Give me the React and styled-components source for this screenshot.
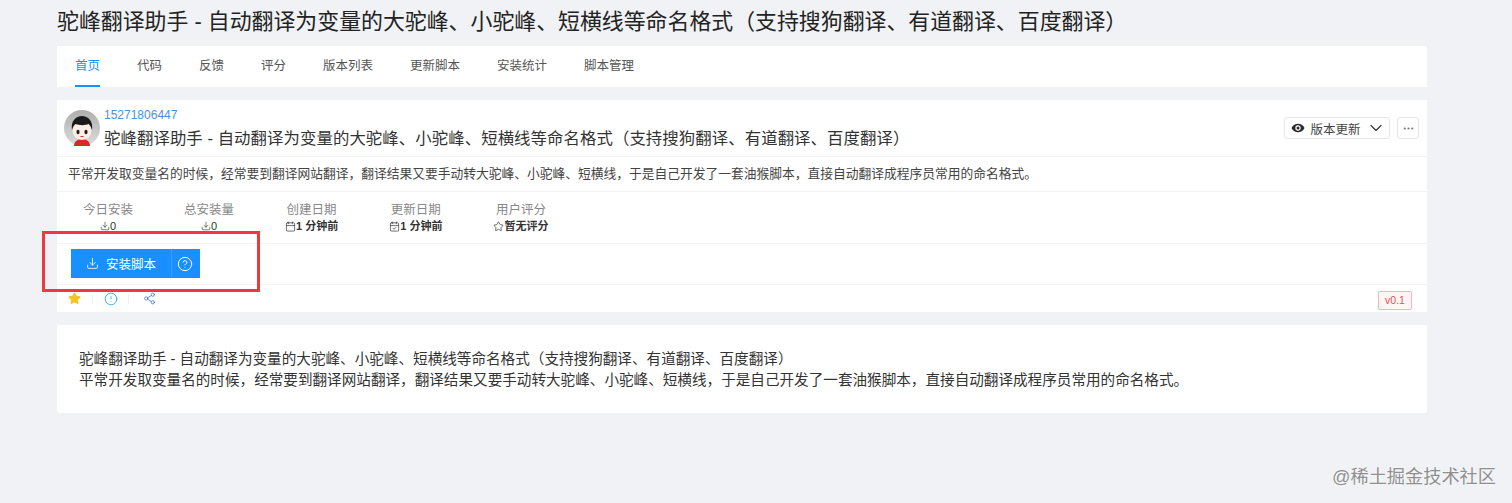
import styled, { createGlobalStyle } from "styled-components";
import { ChevronDown, Ellipsis, Download, CircleHelp, Star, CircleAlert, Share2, Calendar, CalendarCheck } from "lucide-react";

const GlobalStyle = createGlobalStyle`
  html, body {
    margin: 0;
    padding: 0;
    height: 503px;
    overflow: hidden;
    background: #f0f2f5;
    color: #333;
    font-family: "Liberation Sans", "Noto Sans CJK SC", sans-serif;
  }
`;

const Page = styled.div`
  position: relative;
  width: 1512px;
  height: 503px;
  padding-left: 57px;
  box-sizing: border-box;
`;

const Column = styled.div`
  width: 1370px;
  display: flex;
  flex-direction: column;
`;

const PageTitle = styled.h1`
  margin: 0;
  height: 46px;
  line-height: 44px;
  font-size: 21.9px;
  font-weight: 400;
  color: #222;
  white-space: nowrap;
`;

const Tabs = styled.nav`
  height: 41px;
  background: #fff;
  display: flex;
  padding-left: 18px;
  gap: 37px;
  margin-bottom: 13px;
`;

const Tab = styled.a`
  height: 41px;
  line-height: 41px;
  box-sizing: border-box;
  font-size: 12.5px;
  white-space: nowrap;
  color: ${(p) => (p.$active ? "#1890ff" : "#555")};
  border-bottom: ${(p) => (p.$active ? "2px solid #1890ff" : "none")};
`;

const Card = styled.section`
  background: #fff;
  display: flex;
  flex-direction: column;
`;

const Header = styled.header`
  height: 57px;
  box-sizing: border-box;
  display: flex;
  align-items: flex-start;
  padding: 8px 8px 0 7px;
  border-bottom: 1px solid #f2f3f5;
`;

const Avatar = styled.svg`
  width: 36px;
  height: 36px;
  margin-top: 2px;
  flex: none;
`;

const HeaderText = styled.div`
  margin-left: 4px;
  flex: 1;
  min-width: 0;
`;

const Author = styled.div`
  font-size: 12px;
  line-height: 14px;
  color: #4a90e2;
`;

const ScriptName = styled.div`
  font-size: 16.4px;
  letter-spacing: 0.08px;
  line-height: 22px;
  margin-top: 5px;
  white-space: nowrap;
  color: #333;
`;

const Actions = styled.div`
  display: flex;
  gap: 7px;
  margin-top: 9px;
`;

const OutlineButton = styled.button`
  height: 22px;
  box-sizing: border-box;
  border: 1px solid #e4e6ea;
  border-radius: 3px;
  background: #fff;
  padding: 0 0 0 ${(p) => p.$inset || 0}px;
  width: ${(p) => p.$width};
  display: flex;
  align-items: center;
  justify-content: center;
  gap: 5px;
  font: inherit;
  font-size: 12.5px;
  color: #444;
`;

const Description = styled.p`
  margin: 0;
  height: 35px;
  line-height: 33px;
  box-sizing: border-box;
  padding-left: 11px;
  font-size: 12.75px;
  color: #444;
  border-bottom: 1px solid #f2f3f5;
  white-space: nowrap;
`;

const Stats = styled.div`
  height: 52px;
  box-sizing: border-box;
  display: flex;
  gap: 51px;
  padding: 11px 0 0 26px;
  border-bottom: 1px solid #f2f3f5;
`;

const Stat = styled.div`
  display: flex;
  flex-direction: column;
  align-items: center;
`;

const StatLabel = styled.div`
  font-size: 12.5px;
  line-height: 15px;
  color: #888;
`;

const StatValue = styled.div`
  font-size: 11px;
  line-height: 14px;
  margin-top: 1px;
  color: #333;
  font-weight: ${(p) => (p.$bold ? 700 : 400)};
  display: flex;
  align-items: center;
  justify-content: center;
  white-space: nowrap;
`;

const InstallRow = styled.div`
  height: 41px;
  box-sizing: border-box;
  padding: 5px 0 0 14px;
  display: flex;
  border-bottom: 1px solid #f2f3f5;
`;

const InstallButton = styled.button`
  width: 100px;
  height: 29px;
  border: none;
  background: #1890ff;
  color: #fff;
  font: inherit;
  font-size: 12.5px;
  padding: 0;
  display: flex;
  align-items: center;
  justify-content: center;
  gap: 7px;
`;

const HelpButton = styled.button`
  width: 29px;
  height: 29px;
  border: none;
  border-left: 1px solid #3aa0ff;
  background: #1890ff;
  color: #fff;
  padding: 0 2px 0 0;
  display: flex;
  align-items: center;
  justify-content: center;
`;

const CardFooter = styled.footer`
  height: 27px;
  box-sizing: border-box;
  display: flex;
  align-items: flex-start;
  padding: 6px 15px 0 11px;
`;

const FooterIcon = styled.span`
  display: flex;
  align-items: center;
  width: 36px;
  height: 15px;
  padding-left: ${(p) => p.$inset || 0}px;
  &::after {
    content: "";
    display: ${(p) => (p.$divider ? "block" : "none")};
    width: 1px;
    height: 10px;
    background: #eceef1;
    margin-left: auto;
    margin-right: 11px;
  }
`;

const Version = styled.span`
  margin-left: auto;
  height: 19px;
  line-height: 17px;
  width: 34px;
  box-sizing: border-box;
  text-align: center;
  border: 1px solid #f5b5b8;
  border-radius: 2px;
  background: #fff5f5;
  color: #e2535b;
  font-size: 10.5px;
`;

const Readme = styled.section`
  margin-top: 13px;
  height: 88px;
  box-sizing: border-box;
  background: #fff;
  border-radius: 2px;
  padding: 24px 22px 0;
  font-size: 14.6px;
  line-height: 21px;
  color: #333;
  white-space: nowrap;
`;

const Highlight = styled.div`
  position: absolute;
  left: 42px;
  top: 231px;
  width: 218px;
  height: 61px;
  box-sizing: border-box;
  border: 3px solid #eb3b3b;
`;

const Watermark = styled.div`
  position: absolute;
  right: 16px;
  bottom: 15px;
  font-size: 18.2px;
  line-height: 22px;
  color: #8f8f8f;
  text-shadow: 0 0 2px #fff;
  white-space: nowrap;
`;

const TITLE = "驼峰翻译助手 - 自动翻译为变量的大驼峰、小驼峰、短横线等命名格式（支持搜狗翻译、有道翻译、百度翻译）";
const DESC = "平常开发取变量名的时候，经常要到翻译网站翻译，翻译结果又要手动转大驼峰、小驼峰、短横线，于是自己开发了一套油猴脚本，直接自动翻译成程序员常用的命名格式。";

const tabs = ["首页", "代码", "反馈", "评分", "版本列表", "更新脚本", "安装统计", "脚本管理"];

function AvatarIcon() {
  return (
    <Avatar viewBox="0 0 36 36">
      <defs>
        <linearGradient id="avatarBg" x1="0" y1="0" x2="0" y2="1">
          <stop offset="0" stopColor="#aeaeae" />
          <stop offset="1" stopColor="#dcdcdc" />
        </linearGradient>
      </defs>
      <circle cx="18" cy="18" r="18" fill="url(#avatarBg)" />
      <path d="M10 36c0-4 3-7 8-7s8 3 8 7z" fill="#d42a2a" />
      <ellipse cx="18" cy="20.5" rx="9.5" ry="9.5" fill="#fbeee6" />
      <path d="M8 20c-1.500-9 4-14 10-14s11.500 5 10 14c-1-3-2-5-3.500-6-3 1.500-9 1.500-13 0-1.500 1-2.500 3-3.500 6z" fill="#1a1a1a" />
      <ellipse cx="14" cy="22" rx="1.600" ry="2.200" fill="#222" />
      <ellipse cx="22" cy="22" rx="1.600" ry="2.200" fill="#222" />
      <path d="M16.500 26.500h3" stroke="#c0392b" strokeWidth="1" />
    </Avatar>
  );
}

function EyeIcon() {
  return (
    <svg width="14" height="14" viewBox="0 0 14 14">
      <path d="M0.500 7C2 4 4.300 2.800 7 2.800S12 4 13.500 7C12 10 9.700 11.200 7 11.200S2 10 0.500 7z" fill="#2b2b2b" />
      <circle cx="7" cy="7" r="2.700" fill="#fff" />
      <circle cx="7" cy="7" r="1.500" fill="#2b2b2b" />
    </svg>
  );
}

export default function App() {
  return (
    <>
      <GlobalStyle />
      <Page>
        <Column>
          <PageTitle>{TITLE}</PageTitle>
          <Tabs>
            {tabs.map((t, i) => (
              <Tab key={t} $active={i === 0}>{t}</Tab>
            ))}
          </Tabs>
          <Card>
            <Header>
              <AvatarIcon />
              <HeaderText>
                <Author>15271806447</Author>
                <ScriptName>{TITLE}</ScriptName>
              </HeaderText>
              <Actions>
                <OutlineButton $width="106px" $inset={3}>
                  <EyeIcon />
                  版本更新
                  <ChevronDown size={20} strokeWidth={1.3} color="#333" />
                </OutlineButton>
                <OutlineButton $width="22px">
                  <Ellipsis size={13} color="#777" />
                </OutlineButton>
              </Actions>
            </Header>
            <Description>{DESC}</Description>
            <Stats>
              <Stat>
                <StatLabel>今日安装</StatLabel>
                <StatValue><Download size={10} strokeWidth={1.5} />0</StatValue>
              </Stat>
              <Stat>
                <StatLabel>总安装量</StatLabel>
                <StatValue><Download size={10} strokeWidth={1.5} />0</StatValue>
              </Stat>
              <Stat>
                <StatLabel>创建日期</StatLabel>
                <StatValue $bold><Calendar size={11} strokeWidth={1.5} />1 分钟前</StatValue>
              </Stat>
              <Stat>
                <StatLabel>更新日期</StatLabel>
                <StatValue $bold><CalendarCheck size={11} strokeWidth={1.5} />1 分钟前</StatValue>
              </Stat>
              <Stat>
                <StatLabel>用户评分</StatLabel>
                <StatValue $bold><Star size={11} strokeWidth={1.5} />暂无评分</StatValue>
              </Stat>
            </Stats>
            <InstallRow>
              <InstallButton>
                <Download size={13} strokeWidth={1.5} />
                安装脚本
              </InstallButton>
              <HelpButton>
                <CircleHelp size={16} strokeWidth={1.5} />
              </HelpButton>
            </InstallRow>
            <CardFooter>
              <FooterIcon $divider><Star size={13} fill="#f7c325" color="#f7c325" /></FooterIcon>
              <FooterIcon $divider><CircleAlert size={14} strokeWidth={1.5} color="#2ab3d6" /></FooterIcon>
              <FooterIcon $inset={3}><Share2 size={13} strokeWidth={1.5} color="#4a7fd8" /></FooterIcon>
              <Version>v0.1</Version>
            </CardFooter>
          </Card>
          <Readme>
            <div>{TITLE}</div>
            <div>{DESC}</div>
          </Readme>
        </Column>
        <Highlight />
        <Watermark>@稀土掘金技术社区</Watermark>
      </Page>
    </>
  );
}
